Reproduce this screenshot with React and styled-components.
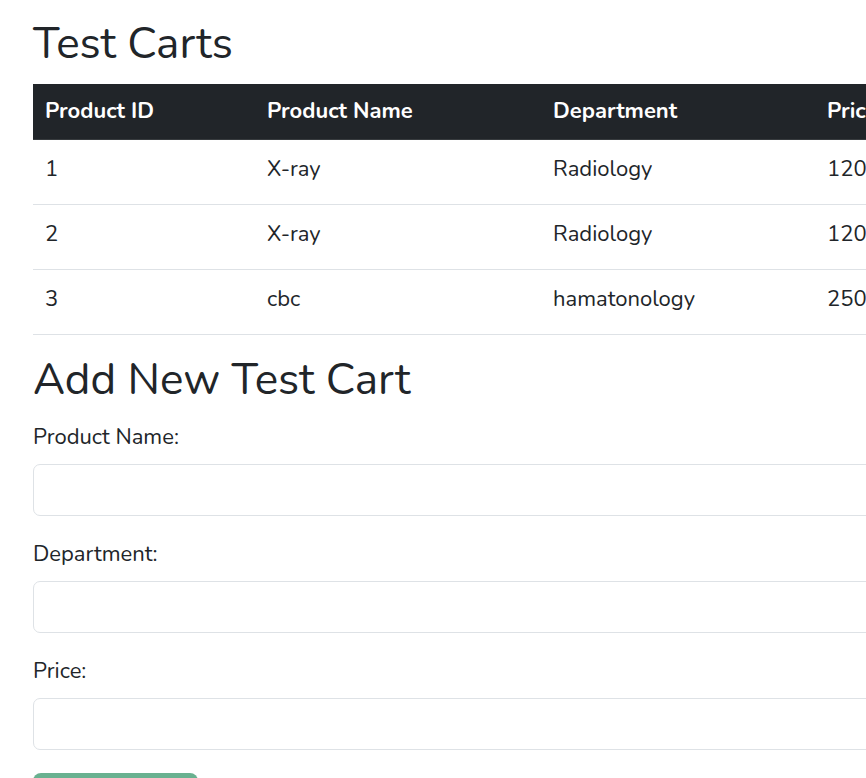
import React from "react";
import styled, { createGlobalStyle } from "styled-components";

const GlobalStyle = createGlobalStyle`
  html, body {
    margin: 0;
    padding: 0;
    overflow: hidden;
    background: #fff;
  }
  body {
    font-family: "Nunito", "Lato", "Noto Sans", sans-serif;
    color: #212529;
  }
`;

const carts = [
  { id: 1, name: "X-ray", department: "Radiology", price: 1200 },
  { id: 2, name: "X-ray", department: "Radiology", price: 1200 },
  { id: 3, name: "cbc", department: "hamatonology", price: 250 },
];

const App = () => {
  return (
    <>
      <GlobalStyle />
      <Container>
        <Title>Test Carts</Title>
        <Table>
          <thead>
            <tr>
              <Th width={222}>Product ID</Th>
              <Th width={286}>Product Name</Th>
              <Th width={274}>Department</Th>
              <Th>Price</Th>
            </tr>
          </thead>
          <tbody>
            {carts.map((c) => (
              <tr key={c.id}>
                <Td>{c.id}</Td>
                <Td>{c.name}</Td>
                <Td>{c.department}</Td>
                <Td>{c.price}</Td>
              </tr>
            ))}
          </tbody>
        </Table>
        <SubTitle>Add New Test Cart</SubTitle>
        <Form>
          <Field>
            <Label>Product Name:</Label>
            <Input type="text" />
          </Field>
          <Field>
            <Label>Department:</Label>
            <Input type="text" />
          </Field>
          <Field>
            <Label>Price:</Label>
            <Input type="text" />
          </Field>
          <Submit disabled>Add Test Cart</Submit>
        </Form>
      </Container>
    </>
  );
};

const Container = styled.div`
  width: 1100px;
  padding: 18px 0 0 33px;
`;

const Title = styled.h1`
  margin: 0 0 13px;
  font-size: 44px;
  font-weight: 400;
  line-height: 53px;
`;

const SubTitle = styled(Title)`
  margin: 19px 0 15px;
`;

const Table = styled.table`
  width: 100%;
  table-layout: fixed;
  border-collapse: collapse;
  font-size: 22px;
  line-height: 33px;
`;

const Th = styled.th`
  width: ${(p) => (p.width ? `${p.width}px` : "auto")};
  height: 55px;
  box-sizing: border-box;
  padding: 11px 12px 0;
  vertical-align: top;
  background: #212529;
  color: #fff;
  font-weight: 700;
  text-align: left;
  white-space: nowrap;
  border-bottom: 1px solid #373b3e;
`;

const Td = styled.td`
  height: 65px;
  box-sizing: border-box;
  padding: 13px 12px 0;
  vertical-align: top;
  white-space: nowrap;
  border-bottom: 1px solid #dee2e6;
`;

const Form = styled.form`
  display: flex;
  flex-direction: column;
  gap: 23px;
`;

const Field = styled.div`
  display: flex;
  flex-direction: column;
  gap: 12px;
`;

const Label = styled.label`
  font-size: 22px;
  line-height: 30px;
`;

const Input = styled.input`
  box-sizing: border-box;
  width: 100%;
  height: 52px;
  border: 1px solid #dee2e6;
  border-radius: 7px;
  font-size: 22px;
  padding: 0 16px;
  outline: none;
`;

const Submit = styled.button`
  align-self: flex-start;
  width: 165px;
  height: 52px;
  border: none;
  border-radius: 8px;
  background: #198754;
  opacity: 0.65;
  color: #fff;
  font-size: 22px;
  font-family: inherit;
`;

export default App;
